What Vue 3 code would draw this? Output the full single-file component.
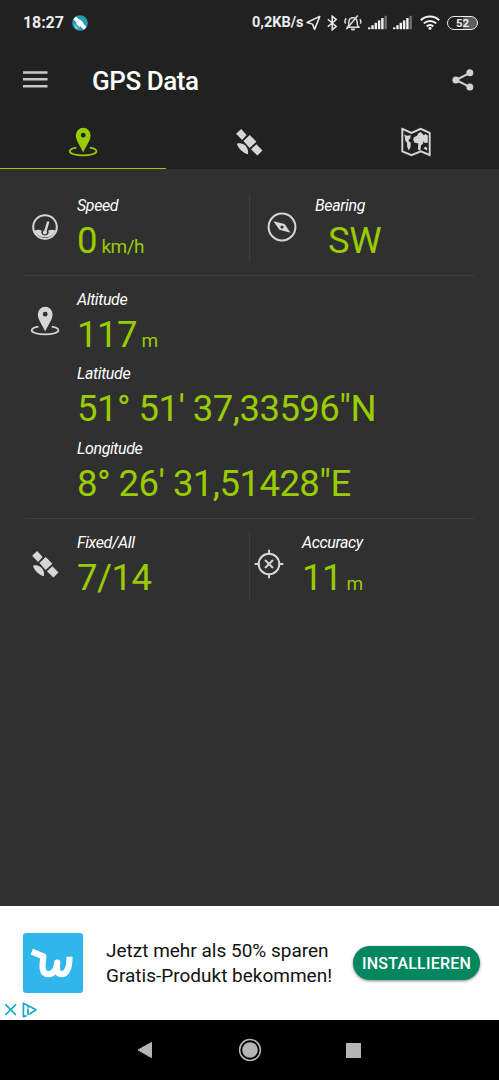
<template>
    <div class="screen">
        <header class="status-bar">
            <span class="clock">18:27</span>
            <svg class="app-badge" width="16" height="16" viewBox="0 0 16 16">
                <circle cx="8" cy="8" r="7.8" fill="#239db3" />
                <path d="M2 9 7 14.5 3.5 13Z" fill="#b9e3ea" />
                <g transform="rotate(45 8 8)" fill="#fff">
                    <rect x="0.6" y="6.2" width="4.6" height="3.8" />
                    <rect x="5.2" y="5.4" width="5.4" height="5.4" />
                    <rect x="10.6" y="6.2" width="4.8" height="3.8" />
                </g>
                <path d="M3.4 8.2A5 5 0 0 1 7.8 12.8Z" fill="#d9f1f5" />
            </svg>
            <span class="net-speed">0,2KB/s</span>
            <svg class="s-arrow" width="15" height="16" viewBox="0 0 15 16">
                <path
                    d="M13.8 1.4 1 7.5 6.5 9.1 8.6 14.4Z"
                    fill="none"
                    stroke="#ececec"
                    stroke-width="1.5"
                    stroke-linejoin="round"
                />
            </svg>
            <svg class="s-bt" width="11" height="16" viewBox="0 0 11 16">
                <path
                    d="M.8 4.2 9.2 11.4 5.2 14.8V1.2L9.2 4.6.8 11.8"
                    fill="none"
                    stroke="#ececec"
                    stroke-width="1.5"
                />
            </svg>
            <svg class="s-bell" width="18" height="16" viewBox="0 0 18 16">
                <g fill="none" stroke="#dcdcdc" stroke-width="1.5">
                    <path
                        d="M2.6 12.3h13.2M4 12C5.2 10.4 4.6 8.4 4.9 6.6 5.3 4.1 6.9 2.8 9 2.8c2.3 0 3.8 1.6 4.1 3.9.3 2.1-.1 3.7 1.3 5.3M2.3 3.4C.7 5 .7 7 1.6 8.6M15.9 4.2c1.1 1.3 1.2 3 .4 4.5"
                    />
                    <path d="M2.4 14.2 13.8.6" />
                </g>
                <path d="M6.8 13.4h4.4a2.2 2.2 0 0 1-4.4 0Z" fill="#dcdcdc" />
            </svg>
            <svg
                v-for="n in 2"
                :key="n"
                class="s-signal"
                width="19"
                height="15"
                viewBox="0 0 19 15"
            >
                <rect
                    v-for="(h, i) in bars"
                    :key="h"
                    :x="i * 3.3"
                    :y="14.2 - h"
                    width="2.4"
                    :height="h"
                    :fill="i === 5 ? '#707070' : '#f2f2f2'"
                />
            </svg>
            <svg class="s-wifi" width="20" height="15" viewBox="0 0 20 15">
                <g fill="none" stroke="#f2f2f2" stroke-width="2">
                    <path d="M.8 5.2a13.2 13.2 0 0 1 18.4 0" />
                    <path d="M3.8 8.4a8.9 8.9 0 0 1 12.4 0" />
                    <path d="M6.7 11.4a4.8 4.8 0 0 1 6.6 0" />
                </g>
                <circle cx="10" cy="13.3" r="1.5" fill="#f2f2f2" />
            </svg>
            <span class="battery">52</span>
        </header>

        <div class="toolbar">
            <svg class="menu" width="25" height="17" viewBox="0 0 25 17">
                <path
                    d="M0 1.5h24.5M0 8.3h24.5M0 15.2h24.5"
                    stroke="#c8c8c8"
                    stroke-width="2.4"
                />
            </svg>
            <h1 class="title">GPS Data</h1>
            <svg class="share" width="22" height="22" viewBox="0 0 22 22">
                <path
                    d="M18 3.8 4 11 18 18.2"
                    fill="none"
                    stroke="#d2d2d2"
                    stroke-width="2"
                />
                <g fill="#d2d2d2">
                    <circle cx="17.8" cy="3.8" r="3.5" />
                    <circle cx="3.9" cy="11" r="3.5" />
                    <circle cx="17.8" cy="18" r="3.5" />
                </g>
            </svg>
        </div>

        <nav class="tabs">
            <div class="tab active">
                <svg class="icon" viewBox="0 0 30 30">
                    <path :d="pin" fill="currentColor" fill-rule="evenodd" />
                    <path :d="ring" class="line thin" />
                </svg>
            </div>
            <div class="tab">
                <svg class="icon" viewBox="0 0 30 30">
                    <path :d="satellite" fill="currentColor" />
                </svg>
            </div>
            <div class="tab">
                <svg class="icon" viewBox="0 0 30 30">
                    <path
                        d="M1.3 1.9 10.5 5.9 19.7 1.9 28.7 5.9V28L19.7 24.4 10.5 28.2 1.3 24.4Z"
                        fill="none"
                        stroke="currentColor"
                        stroke-width="1.9"
                    />
                    <path
                        d="M3.3 7.3 5.5 8.8 9.8 8.2 9.2 11.4 7.5 12.9 8.1 14.6 9.8 15.7 9.5 20 7.8 23.6 6.2 20 6 15.7 4.3 13.7ZM13 10.3 16 8.7 17.2 6.5 19.6 5 21.2 6.6 22.8 8.3 24.3 7 26.8 8.5V15.8L23.7 16.1 22.6 14.3 21.8 17.2 20.1 18.1 19.3 23.8 16.9 22.5 17.3 16.4 13.2 15.4 12.2 12.6ZM22.5 21.6 24.5 19.6 26.2 21V23.4Z"
                        fill="currentColor"
                    />
                </svg>
            </div>
        </nav>

        <main class="data">
            <section class="row">
                <div class="cell left">
                    <svg class="icon" viewBox="0 0 30 30">
                        <circle cx="15" cy="15" r="11.8" class="line" />
                        <path
                            d="M4.3 18.8C6.7 17.3 9.4 17.3 11.7 18.6L11.3 20.6A3.8 3.8 0 0 0 18.7 20.6L18.3 18.6C20.6 17.3 23.3 17.3 25.7 18.8A12 12 0 0 1 4.3 18.8Z"
                            fill="currentColor"
                        />
                        <path
                            d="M18 10.4 15.1 20.2"
                            stroke="currentColor"
                            stroke-width="2.4"
                            stroke-linecap="round"
                        />
                        <circle cx="14.9" cy="20.6" r="2" fill="currentColor" />
                    </svg>
                    <div class="metric">
                        <div class="label">Speed</div>
                        <div class="value">0<small>km/h</small></div>
                    </div>
                </div>
                <div class="cell bearing">
                    <svg class="icon" viewBox="0 0 30 30">
                        <circle cx="15" cy="15" r="13.4" class="line" />
                        <path
                            d="M6.4 9.3 17.6 12 23.6 20.7 12.4 17.8ZM15 13.4a1.6 1.6 0 1 0 0 3.2 1.6 1.6 0 0 0 0-3.2Z"
                            fill="currentColor"
                            fill-rule="evenodd"
                        />
                    </svg>
                    <div class="metric">
                        <div class="label">Bearing</div>
                        <div class="value">SW</div>
                    </div>
                </div>
            </section>

            <section class="row position">
                <svg class="icon" viewBox="0 0 30 30">
                    <path :d="pin" fill="currentColor" fill-rule="evenodd" />
                    <path :d="ring" class="line thin" />
                </svg>
                <div class="stack">
                    <div v-for="m in position" :key="m.label" class="metric">
                        <div class="label">{{ m.label }}</div>
                        <div class="value">
                            {{ m.value }}<small v-if="m.unit">{{ m.unit }}</small>
                        </div>
                    </div>
                </div>
            </section>

            <section class="row">
                <div class="cell left">
                    <svg class="icon" viewBox="0 0 30 30">
                        <path :d="satellite" fill="currentColor" />
                    </svg>
                    <div class="metric">
                        <div class="label">Fixed/All</div>
                        <div class="value">7/14</div>
                    </div>
                </div>
                <div class="cell accuracy">
                    <svg class="icon" viewBox="0 0 30 30">
                        <circle cx="15" cy="15" r="10.3" class="line" />
                        <path
                            d="M15 .7V5.2M15 24.8v4.5M.7 15H5.2M24.8 15h4.5M11 11l8 8M19 11l-8 8"
                            class="line"
                        />
                    </svg>
                    <div class="metric">
                        <div class="label">Accuracy</div>
                        <div class="value">11<small>m</small></div>
                    </div>
                </div>
            </section>
        </main>

        <aside class="ad">
            <svg class="ad-logo" width="60" height="60" viewBox="0 0 60 60">
                <rect width="60" height="60" rx="3" fill="#2fb7ec" />
                <path
                    d="M8.8 18.6 20.4 23.3C19.4 31 17.8 41.2 25.3 41.2c5.2 0 8.2-4.7 8.9-11.7C33.4 36 33.6 41.2 38.4 41.2c6.2 0 8.1-7.5 8.1-17.4"
                    fill="none"
                    stroke="#fff"
                    stroke-width="6.2"
                    stroke-linejoin="round"
                />
            </svg>
            <p class="ad-text">Jetzt mehr als 50% sparen<br />Gratis-Produkt bekommen!</p>
            <button class="install">INSTALLIEREN</button>
            <svg class="ad-choices" width="33" height="16" viewBox="0 0 33 16">
                <g fill="none" stroke="#12aacb" stroke-width="1.7">
                    <path d="M1.3 2.4 12 13M12 2.4 1.3 13" />
                    <path d="M22.6 13.6 19.4 14.6V1.2L32 7.8 25.3 12.2" stroke-linejoin="round" />
                    <path d="M24 6.6V13" />
                </g>
                <circle cx="24" cy="4.9" r="0.9" fill="#12aacb" />
            </svg>
        </aside>

        <footer class="nav-bar">
            <svg width="16" height="18" viewBox="0 0 16 18">
                <path d="M1 9 14.5 1.4V16.6Z" fill="#b5b5b5" stroke="#b5b5b5" stroke-linejoin="round" />
            </svg>
            <svg width="24" height="24" viewBox="0 0 24 24">
                <circle cx="12" cy="12" r="10.4" fill="none" stroke="#b5b5b5" stroke-width="1.5" />
                <circle cx="12" cy="12" r="7.8" fill="#b5b5b5" />
            </svg>
            <span class="recent"></span>
        </footer>
    </div>
</template>

<script setup>
const bars = [1.8, 4, 6.4, 8.8, 11.2, 13.4];

const pin =
    "M15.2.8A7.4 7.4 0 0 0 7.8 8.2C7.8 13.6 12.2 18.7 15.2 25.4 18.2 18.7 22.6 13.6 22.6 8.2A7.4 7.4 0 0 0 15.2.8ZM15.2 5.8a2.4 2.4 0 1 1 0 4.8 2.4 2.4 0 0 1 0-4.8Z";
const ring =
    "M8.4 20.6C4.2 21.3 1.7 22.7 1.7 24.3 1.7 26.7 7.8 28.4 15.1 28.4S28.5 26.7 28.5 24.3C28.5 22.7 25.9 21.3 21.8 20.6";
const satellite =
    "M7.2 2 12.6 7.9 8.1 13 2.1 6.7ZM15.7 8.1 22.4 14.7 15.6 21.1 9.4 14.1ZM22.4 17.2 28.5 23.6 23.4 28.6 17 22.2ZM2.9 16.8C9.4 14.6 15.3 20.4 13.9 27.3 9.6 26.6 4.2 21.4 2.9 16.8Z";

const position = [
    { label: "Altitude", value: "117", unit: "m" },
    { label: "Latitude", value: "51° 51' 37,33596\"N" },
    { label: "Longitude", value: "8° 26' 31,51428\"E" },
];
</script>

<style>
body {
    margin: 0;
    background: #303030;
}
</style>

<style scoped>
.screen {
    width: 499px;
    height: 1080px;
    display: flex;
    flex-direction: column;
    overflow: hidden;
    background: #303030;
    color: #fff;
    font-family: Roboto, sans-serif;
}

svg {
    display: block;
    flex: none;
}

.status-bar {
    height: 45px;
    box-sizing: border-box;
    padding: 0 21px 0 23px;
    display: flex;
    align-items: center;
    background: #212121;
    color: #ececec;
    white-space: nowrap;
}

.clock {
    width: 49px;
    font-size: 16px;
    font-weight: 700;
    letter-spacing: -0.1px;
}

.net-speed {
    width: 54px;
    margin-left: auto;
    font-size: 14.5px;
    font-weight: 700;
}

.s-bt {
    margin-left: 6px;
}

.s-bell {
    margin-left: 6px;
}

.s-signal {
    margin-left: 6px;
}

.s-wifi {
    margin-left: 8px;
}

.battery {
    width: 31px;
    height: 14px;
    margin-left: 7px;
    box-sizing: border-box;
    border: 1.5px solid #ececec;
    border-radius: 7px;
    background: linear-gradient(90deg, #212121 50%, #5d5d5d 50%);
    font-size: 11.5px;
    font-weight: 700;
    line-height: 12.5px;
    text-align: center;
}

.toolbar {
    height: 70px;
    box-sizing: border-box;
    padding: 0 25px 0 23px;
    display: flex;
    align-items: center;
    background: #212121;
}

.menu {
    margin-bottom: 2px;
}

.title {
    margin: 2px 0 0 44px;
    font-size: 26px;
    font-weight: 500;
    letter-spacing: -0.45px;
}

.share {
    margin-left: auto;
}

.tabs {
    height: 54px;
    display: flex;
    background: #212121;
    color: #d2d2d2;
}

.tab {
    flex: 1;
    display: flex;
    align-items: center;
    justify-content: center;
    box-sizing: border-box;
    border-bottom: 1px solid transparent;
}

.tab.active {
    color: #99cc00;
    border-color: #99cc00;
}

.icon {
    width: 30px;
    height: 30px;
    color: #d6d6d6;
}

.tab.active .icon {
    color: #99cc00;
}

.line {
    fill: none;
    stroke: currentColor;
    stroke-width: 2;
}

.thin {
    stroke-width: 1.7;
}

.data {
    flex: 1;
    padding: 13px 25px 0;
}

.row {
    display: flex;
    padding: 12px 0 13px;
    border-bottom: 1px solid #3e3e3e;
}

.row:last-child {
    border-bottom: none;
}

.cell {
    display: flex;
    height: 68px;
}

.cell .icon {
    margin-top: 18px;
}

.left {
    width: 225px;
    padding-left: 5px;
    box-sizing: border-box;
    border-right: 1px solid #3e3e3e;
}

.left .metric,
.stack {
    margin-left: 17px;
}

.bearing {
    padding-left: 17px;
}

.bearing .metric {
    margin-left: 18px;
}

.bearing .value {
    margin-left: 13px;
}

.accuracy {
    padding-left: 4px;
}

.accuracy .metric {
    margin-left: 18px;
}

.position {
    height: 217px;
    padding-left: 5px;
}

.position .icon {
    margin-top: 18px;
}

.stack .metric {
    height: 74.4px;
}

.label {
    font-size: 16px;
    font-style: italic;
    line-height: 24px;
    letter-spacing: -0.38px;
}

.value {
    color: #99cc00;
    font-size: 36.5px;
    line-height: 45px;
    letter-spacing: -0.54px;
    white-space: nowrap;
}

.value small {
    margin-left: 4.5px;
    font-size: 19px;
}

.ad {
    position: relative;
    height: 114px;
    display: flex;
    align-items: center;
    padding: 0 19px 0 23px;
    box-sizing: border-box;
    background: #fff;
    color: #111;
}

.ad-text {
    margin: 0 0 0 23px;
    font-size: 19px;
    line-height: 25px;
    white-space: nowrap;
}

.install {
    width: 127px;
    height: 34px;
    margin-left: auto;
    padding: 0;
    border: none;
    border-radius: 17px;
    background: #03875f;
    box-shadow: 0 1px 3px rgba(0, 0, 0, 0.5);
    color: #fff;
    font-family: inherit;
    font-size: 16px;
    font-weight: 500;
    letter-spacing: 0.22px;
}

.ad-choices {
    position: absolute;
    left: 4px;
    bottom: 2px;
}

.nav-bar {
    height: 60px;
    display: flex;
    align-items: center;
    justify-content: center;
    gap: 84.5px;
    padding-right: 1px;
    background: #000;
}

.recent {
    width: 15px;
    height: 15px;
    background: #b5b5b5;
}
</style>
